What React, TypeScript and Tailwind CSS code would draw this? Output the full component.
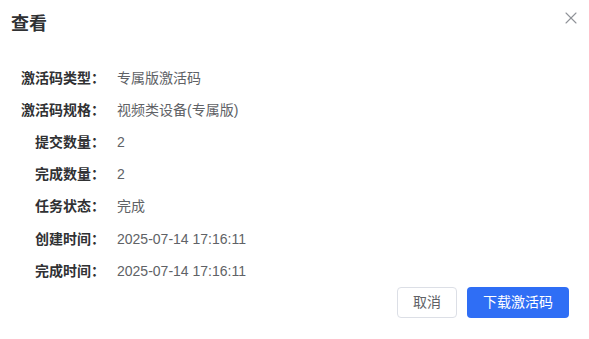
import { X } from "lucide-react";

const rows: [string, string][] = [
  ["激活码类型：", "专属版激活码"],
  ["激活码规格：", "视频类设备(专属版)"],
  ["提交数量：", "2"],
  ["完成数量：", "2"],
  ["任务状态：", "完成"],
  ["创建时间：", "2025-07-14 17:16:11"],
  ["完成时间：", "2025-07-14 17:16:11"],
];

export default function App() {
  return (
    <div
      className="relative h-[339px] w-[589px] bg-white"
      style={{ fontFamily: '"Liberation Sans", "Noto Sans CJK SC", sans-serif' }}
    >
      <div className="flex h-[48px] items-center pl-[11px]">
        <h2 className="text-[18px] font-bold leading-none text-[#303133]">查看</h2>
      </div>
      <button className="absolute right-[8px] top-[8px] text-[#909399]">
        <X className="h-[20px] w-[20px]" strokeWidth={1.3} />
      </button>

      <div className="flex flex-col pt-[14px]">
        {rows.map(([label, value]) => (
          <div key={label} className="flex h-[32.2px] items-center">
            <span className="w-[105px] text-right text-[14px] font-bold text-[#303133]">
              {label}
            </span>
            <span className="pl-[12px] text-[14px] text-[#606266]">{value}</span>
          </div>
        ))}
      </div>

      <div className="absolute right-[20px] top-[287px] flex gap-[10px]">
        <button className="h-[31px] w-[60px] rounded-[4px] border border-[#dcdfe6] bg-white text-[14px] text-[#606266]">
          取消
        </button>
        <button className="h-[31px] w-[102px] rounded-[4px] bg-[#2f6ef5] text-[14px] text-white">
          下载激活码
        </button>
      </div>
    </div>
  );
}
